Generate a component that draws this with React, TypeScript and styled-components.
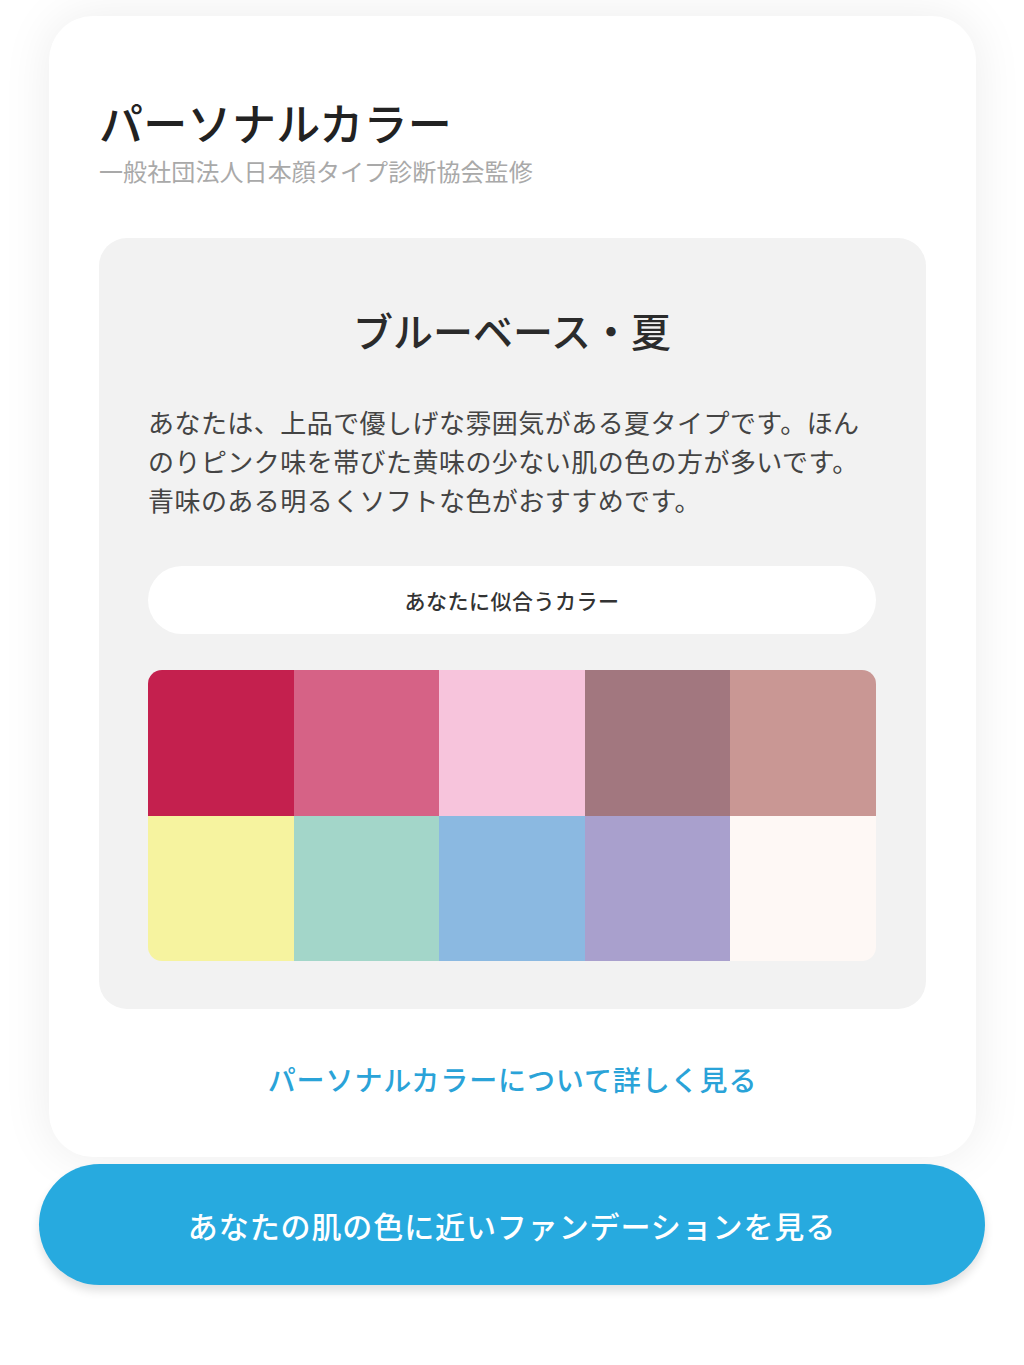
import React from "react";
import styled, { createGlobalStyle } from "styled-components";

const Global = createGlobalStyle`
  html, body {
    margin: 0;
    padding: 0;
    background: #ffffff;
  }
  body {
    font-family: "Noto Sans CJK JP", "Noto Sans", sans-serif;
    -webkit-font-smoothing: antialiased;
  }
`;

const Page = styled.div`
  width: 1024px;
  padding-top: 16px;
  padding-bottom: 78px;
  display: flex;
  flex-direction: column;
  align-items: stretch;
  background: #ffffff;
`;

const Card = styled.section`
  margin: 0 48px 0 49px;
  background: #ffffff;
  border-radius: 44px;
  box-shadow: 0 0 50px rgba(0, 0, 0, 0.08);
  padding: 78px 50px 58px 50px;
  display: flex;
  flex-direction: column;
`;

const Title = styled.h1`
  margin: 0;
  font-size: 44px;
  line-height: 56px;
  font-weight: 500;
  color: #222222;
  letter-spacing: 0.3px;
`;

const Subtitle = styled.p`
  margin: 6px 0 0 0;
  font-size: 24px;
  line-height: 30px;
  font-weight: 400;
  color: #a9a9a9;
  letter-spacing: 0.1px;
`;

const Panel = styled.div`
  margin-top: 52px;
  background: #f2f2f2;
  border-radius: 28px;
  padding: 66px 50px 48px 49px;
  display: flex;
  flex-direction: column;
`;

const TypeHeading = styled.h2`
  margin: 0;
  text-align: center;
  font-size: 40px;
  line-height: 52px;
  font-weight: 500;
  color: #2b2b2b;
`;

const Description = styled.p`
  margin: 46px 0 0 0;
  font-size: 26px;
  line-height: 39px;
  font-weight: 400;
  color: #444444;
  letter-spacing: 0.45px;
  white-space: nowrap;
`;

const Pill = styled.div`
  margin-top: 47px;
  height: 68px;
  border-radius: 34px;
  background: #ffffff;
  display: flex;
  align-items: center;
  justify-content: center;
  font-size: 21px;
  font-weight: 500;
  color: #333333;
  letter-spacing: 0.5px;
`;

const Palette = styled.div`
  margin-top: 36px;
  display: grid;
  grid-template-columns: repeat(5, 1fr);
  grid-template-rows: repeat(2, 145.5px);
  border-radius: 14px;
  overflow: hidden;
`;

const Swatch = styled.div<{ $color: string }>`
  background: ${(p) => p.$color};
`;

const MoreLink = styled.a`
  margin-top: 50px;
  text-align: center;
  font-size: 28px;
  line-height: 40px;
  font-weight: 500;
  color: #2aa3d8;
  letter-spacing: 0.9px;
  text-decoration: none;
  cursor: pointer;
`;

const CtaButton = styled.button`
  margin: 7px 39px 0 39px;
  height: 121px;
  border: none;
  border-radius: 61px;
  background: #27aadf;
  color: #ffffff;
  font-family: "Noto Sans CJK JP", "Noto Sans", sans-serif;
  font-size: 30px;
  font-weight: 500;
  letter-spacing: 0.9px;
  box-shadow: 0 6px 10px rgba(0, 0, 0, 0.12);
  cursor: pointer;
`;

const colors = [
  "#c4204e",
  "#d66286",
  "#f7c4dc",
  "#a2777f",
  "#c99794",
  "#f6f39f",
  "#a3d6c9",
  "#8bb9e1",
  "#a9a0cd",
  "#fef8f5",
];

export default function App() {
  return (
    <>
      <Global />
      <Page>
        <Card>
          <Title>パーソナルカラー</Title>
          <Subtitle>一般社団法人日本顔タイプ診断協会監修</Subtitle>
          <Panel>
            <TypeHeading>ブルーベース・夏</TypeHeading>
            <Description>
              あなたは、上品で優しげな雰囲気がある夏タイプです。ほん
              <br />
              のりピンク味を帯びた黄味の少ない肌の色の方が多いです。
              <br />
              青味のある明るくソフトな色がおすすめです。
            </Description>
            <Pill>あなたに似合うカラー</Pill>
            <Palette>
              {colors.map((c) => (
                <Swatch key={c} $color={c} />
              ))}
            </Palette>
          </Panel>
          <MoreLink>パーソナルカラーについて詳しく見る</MoreLink>
        </Card>
        <CtaButton>あなたの肌の色に近いファンデーションを見る</CtaButton>
      </Page>
    </>
  );
}
